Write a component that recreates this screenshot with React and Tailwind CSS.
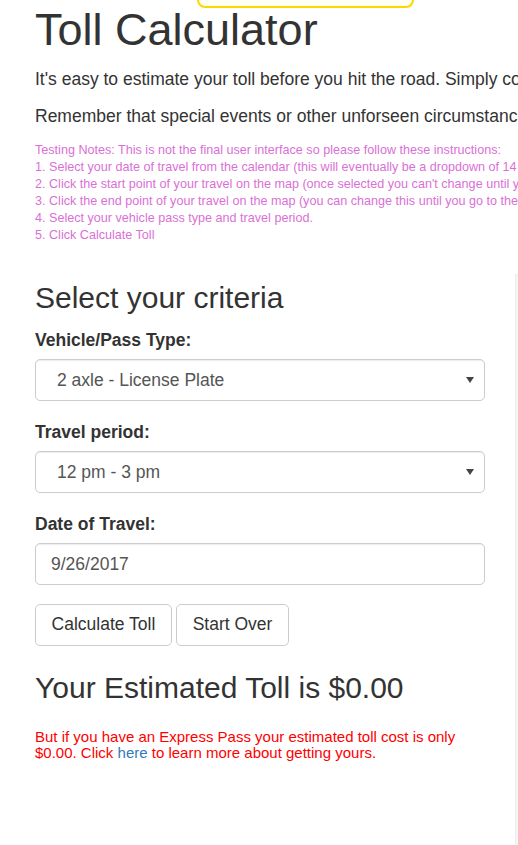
export default function App() {
    return (
        <div className="relative h-[845px] w-[518px] overflow-hidden bg-white font-['Liberation_Sans',Arial,sans-serif] text-[#333]">
            <div className="absolute left-[197px] top-[-30px] flex h-[38px] w-[217px] items-end justify-center rounded-[8px] border-2 border-[#ffd700] bg-[#fffff2] pb-[8px] text-[15px] leading-[15px] text-[#999]">
                Help us improve the app
            </div>

            <div className="w-[1400px] pl-[35px]">
                <h1 className="pt-[5px] text-[45px] font-normal leading-[49.5px]">Toll Calculator</h1>
                <p className="mt-[12px] whitespace-nowrap text-[17.5px] leading-[25px]">
                    It's easy to estimate your toll before you hit the road. Simply complete the steps below and we'll do the math for you.
                </p>
                <p className="mt-[12.5px] whitespace-nowrap text-[17.5px] leading-[25px]">
                    Remember that special events or other unforseen circumstances may affect the actual toll you pay.
                </p>
                <div className="mt-[12.5px] whitespace-nowrap text-[12.6px] leading-[17px] text-[#da70d6]">
                    <div>Testing Notes: This is not the final user interface so please follow these instructions:</div>
                    <div>1. Select your date of travel from the calendar (this will eventually be a dropdown of 14 days)</div>
                    <div>2. Click the start point of your travel on the map (once selected you can't change until you start over)</div>
                    <div>3. Click the end point of your travel on the map (you can change this until you go to the next step)</div>
                    <div>4. Select your vehicle pass type and travel period.</div>
                    <div>5. Click Calculate Toll</div>
                </div>
            </div>

            <div className="mt-[30px] flex h-[600px]">
                <div className="w-[515px] shrink-0 pl-[35px] pr-[30px]">
                    <h3 className="mt-[7px] text-[30px] font-normal leading-[33px]">Select your criteria</h3>

                    <div className="mt-[14px]">
                        <div className="text-[17.5px] font-bold leading-[25px]">Vehicle/Pass Type:</div>
                        <SelectBox value="2 axle - License Plate" />
                    </div>

                    <div className="mt-[18.75px]">
                        <div className="text-[17.5px] font-bold leading-[25px]">Travel period:</div>
                        <SelectBox value="12 pm - 3 pm" />
                    </div>

                    <div className="mt-[18.75px]">
                        <div className="text-[17.5px] font-bold leading-[25px]">Date of Travel:</div>
                        <div className="mt-[6.25px] flex h-[42px] items-center rounded-[5px] border border-[#ccc] px-[15px] text-[17.5px] text-[#555] shadow-[inset_0_1px_1px_rgba(0,0,0,0.075)]">
                            9/26/2017
                        </div>
                    </div>

                    <div className="mt-[18.75px] flex gap-[4px]">
                        <button className="h-[42px] w-[137px] rounded-[5px] border border-[#ccc] bg-white text-[17.5px] text-[#333]">
                            Calculate Toll
                        </button>
                        <button className="h-[42px] w-[113px] rounded-[5px] border border-[#ccc] bg-white text-[17.5px] text-[#333]">
                            Start Over
                        </button>
                    </div>

                    <h3 className="mt-[25px] text-[30px] font-normal leading-[33px]">Your Estimated Toll is $0.00</h3>

                    <p className="mt-[25px] text-[15px] leading-[16px] text-[#ff0000]">
                        But if you have an Express Pass your estimated toll cost is only $0.00. Click{" "}
                        <a href="#" className="text-[#337ab7]">here</a> to learn more about getting yours.
                    </p>
                </div>
                <div className="flex-1 bg-[#f7f7f7] shadow-[inset_1px_0_2px_rgba(0,0,0,0.05)]" />
            </div>
        </div>
    );
}

function SelectBox({ value }) {
    return (
        <div className="mt-[6.25px] flex h-[42px] items-center justify-between rounded-[5px] border border-[#ccc] pl-[21px] pr-[10px] text-[17.5px] text-[#555] shadow-[inset_0_1px_1px_rgba(0,0,0,0.075)]">
            <span>{value}</span>
            <svg width="8" height="6" viewBox="0 0 8 6">
                <polygon points="0,0 8,0 4,6" fill="#444" />
            </svg>
        </div>
    );
}
